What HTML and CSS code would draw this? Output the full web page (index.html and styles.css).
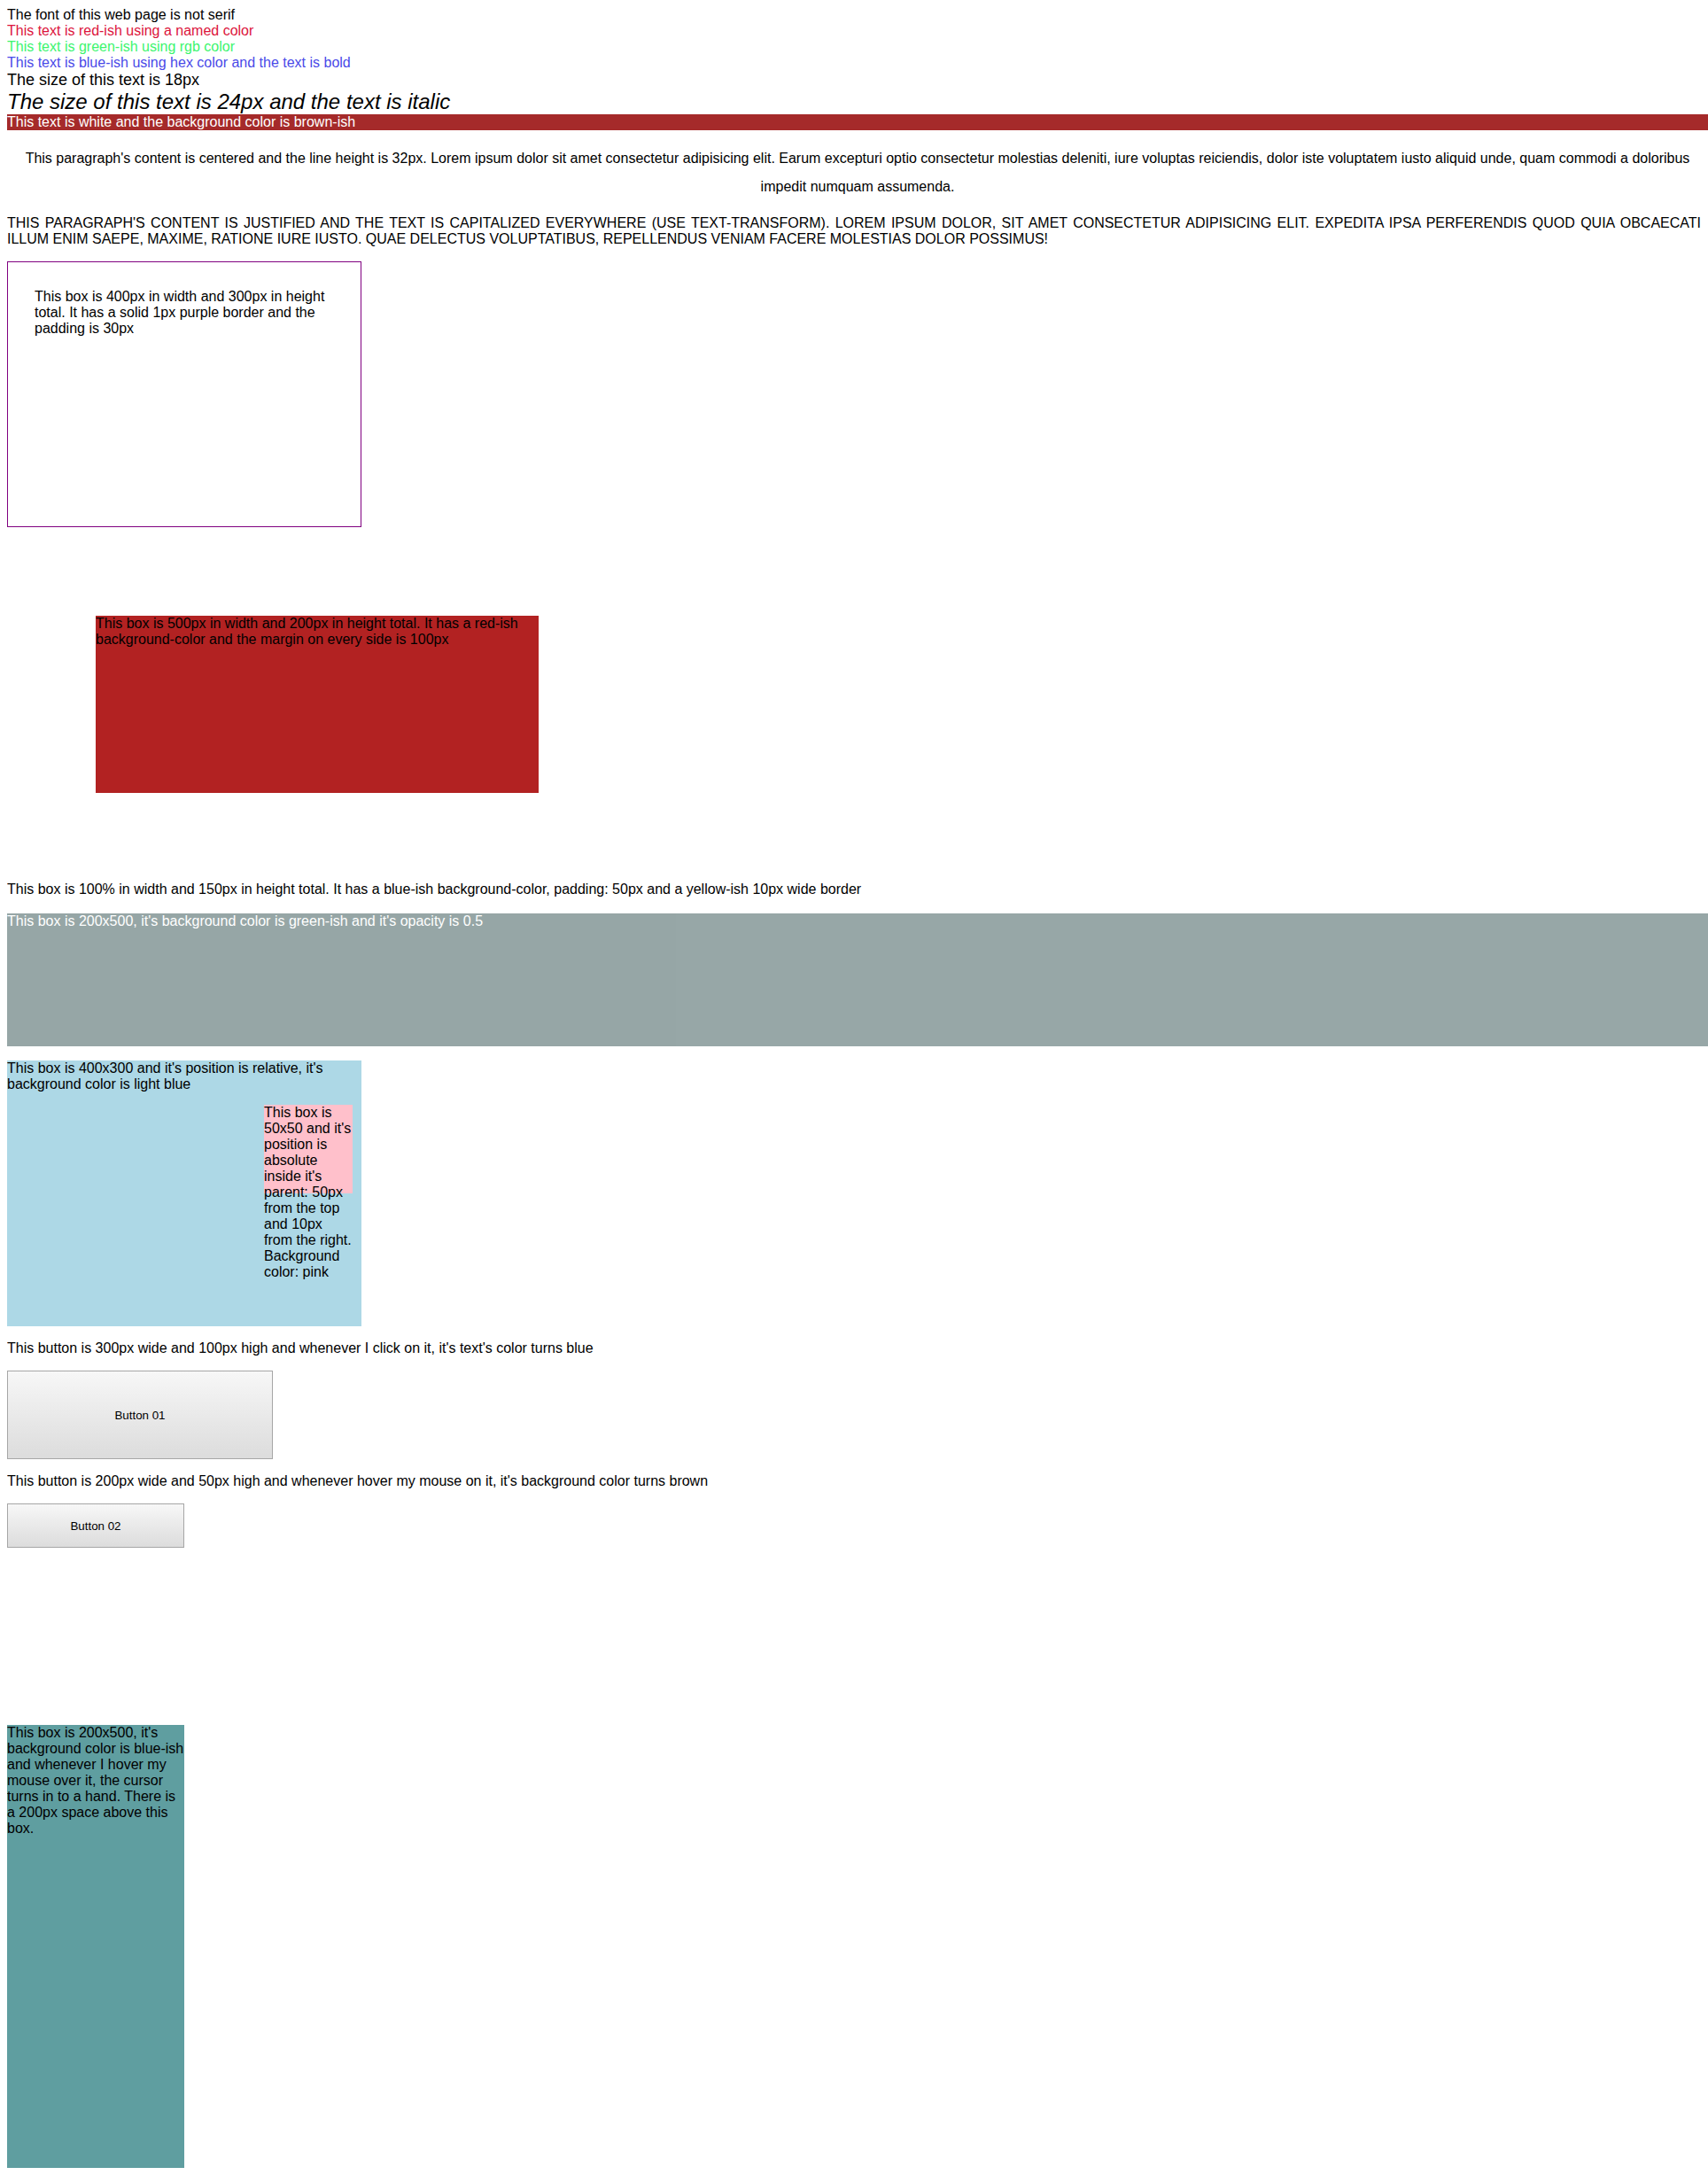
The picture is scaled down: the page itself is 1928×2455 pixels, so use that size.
FILE: index.html
```html
<!DOCTYPE html>
<html lang="en">
<head>
<meta charset="utf-8">
<title>CSS exercises</title>
<link rel="stylesheet" href="styles.css">
</head>
<body>
<div>The font of this web page is not serif</div>
<div class="red-text">This text is red-ish using a named color</div>
<div class="green-text">This text is green-ish using rgb color</div>
<div class="blue-text">This text is blue-ish using hex color and the text is bold</div>
<div class="size-18">The size of this text is 18px</div>
<div class="size-24">The size of this text is 24px and the text is italic</div>
<div class="brown-bar">This text is white and the background color is brown-ish</div>
<p class="centered">This paragraph's content is centered and the line height is 32px. Lorem ipsum dolor sit amet consectetur adipisicing elit. Earum excepturi optio consectetur molestias deleniti, iure voluptas reiciendis, dolor iste voluptatem iusto aliquid unde, quam commodi a doloribus impedit numquam assumenda.</p>
<p class="justified">This paragraph's content is justified and the text is capitalized everywhere (use text-transform). Lorem ipsum dolor, sit amet consectetur adipisicing elit. Expedita ipsa perferendis quod quia obcaecati illum enim saepe, maxime, ratione iure iusto. Quae delectus voluptatibus, repellendus veniam facere molestias dolor possimus!</p>
<div class="purple-box">This box is 400px in width and 300px in height total. It has a solid 1px purple border and the padding is 30px</div>
<div class="red-box">This box is 500px in width and 200px in height total. It has a red-ish background-color and the margin on every side is 100px</div>
<p class="plain">This box is 100% in width and 150px in height total. It has a blue-ish background-color, padding: 50px and a yellow-ish 10px wide border</p>
<div class="gray-box">This box is 200x500, it's background color is green-ish and it's opacity is 0.5</div>
<div class="relative-box">This box is 400x300 and it's position is relative, it's background color is light blue
  <div class="absolute-box">This box is 50x50 and it's position is absolute inside it's parent: 50px from the top and 10px from the right. Background color: pink</div>
</div>
<p>This button is 300px wide and 100px high and whenever I click on it, it's text's color turns blue</p>
<div><button class="btn btn-big" type="button">Button 01</button></div>
<p>This button is 200px wide and 50px high and whenever hover my mouse on it, it's background color turns brown</p>
<div><button class="btn btn-small" type="button">Button 02</button></div>
<div class="teal-box">This box is 200x500, it's background color is blue-ish and whenever I hover my mouse over it, the cursor turns in to a hand. There is a 200px space above this box.</div>
</body>
</html>
```

FILE: styles.css
```css
body {
  margin: 8px 0 8px 8px;
  font-family: "Liberation Sans", Arial, sans-serif;
  font-size: 16px;
  color: #000;
  background: #fff;
}

.red-text { color: crimson; }
.green-text { color: rgb(60, 245, 110); }
.blue-text { color: #4a4ae8; }
.size-18 { font-size: 18px; }
.size-24 { font-size: 24px; font-style: italic; }

.brown-bar {
  background-color: brown;
  color: #fff;
}

.centered {
  text-align: center;
  line-height: 32px;
}

.justified {
  margin-right: 8px;
  text-align: justify;
  text-transform: uppercase;
}

.purple-box {
  box-sizing: border-box;
  width: 400px;
  height: 300px;
  border: 1px solid purple;
  padding: 30px;
}

.red-box {
  width: 500px;
  height: 200px;
  margin: 100px;
  background-color: firebrick;
}

.plain {
  margin-bottom: 18px;
}

.gray-box {
  height: 150px;
  background-color: darkslategray;
  color: #fff;
  opacity: 0.5;
}

.relative-box {
  position: relative;
  width: 400px;
  height: 300px;
  margin-top: 16px;
  background-color: lightblue;
}

.absolute-box {
  position: absolute;
  top: 50px;
  right: 10px;
  width: 100px;
  height: 100px;
  background-color: pink;
}

.btn {
  display: block;
  box-sizing: border-box;
  margin: 0;
  padding: 0;
  border: 1px solid #a6a6a6;
  background: linear-gradient(#f7f7f7, #dcdcdc);
  font-family: "Liberation Sans", Arial, sans-serif;
  font-size: 13.333px;
  color: #000;
}

.btn-big { width: 300px; height: 100px; }
.btn-small { width: 200px; height: 50px; }
.btn-big:active { color: blue; }
.btn-small:hover { background: brown; }

.teal-box {
  width: 200px;
  height: 500px;
  margin-top: 200px;
  background-color: cadetblue;
  cursor: pointer;
}
```
